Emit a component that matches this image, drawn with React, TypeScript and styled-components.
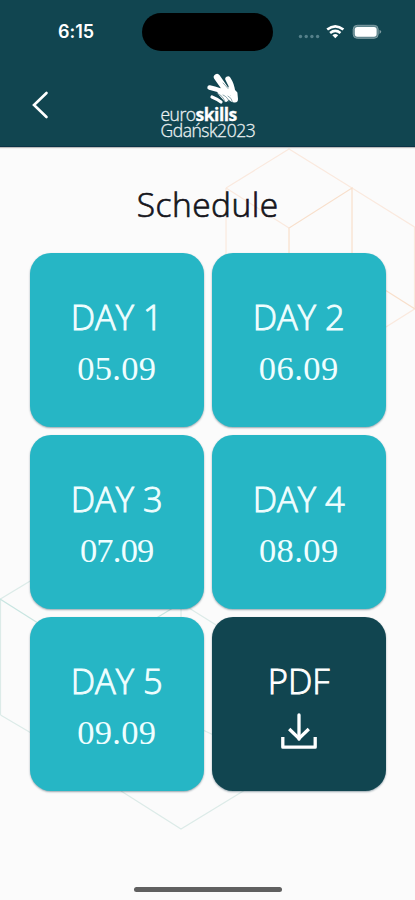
import React from "react";
import styled, { createGlobalStyle } from "styled-components";

const GlobalStyle = createGlobalStyle`
  * { box-sizing: border-box; }
  body { margin: 0; background: #fbfbfb; }
`;

const Screen = styled.div`
  position: relative;
  display: flex;
  flex-direction: column;
  width: 415px;
  height: 900px;
  overflow: hidden;
  background: #fbfbfb;
  font-family: "Open Sans", "Noto Sans", sans-serif;
`;

const Header = styled.header`
  height: 147px;
  flex: none;
  background: #114550;
  border-bottom: 1px solid #0b3346;
  box-shadow: 0 1px 1px rgba(0, 0, 0, 0.25);
  color: #fff;
  z-index: 1;
`;

const StatusBar = styled.div`
  display: grid;
  grid-template-columns: 142px 131px 142px;
  align-items: center;
  height: 38px;
  margin-top: 13px;
`;

const Clock = styled.time`
  padding-left: 10px;
  text-align: center;
  font: 600 18px/38px Inter, sans-serif;
  letter-spacing: -0.1px;
`;

const Island = styled.div`
  height: 38px;
  border-radius: 19px;
  background: #000;
`;

const StatusIcons = styled.svg`
  display: block;
  width: 86px;
  height: 20px;
  margin-left: 23px;
`;

const NavBar = styled.div`
  display: grid;
  grid-template-columns: 160.5px 1fr;
  height: 95px;
`;

const BackButton = styled.button`
  align-self: start;
  width: 22px;
  height: 32px;
  margin: 38px 0 0 29px;
  padding: 0;
  border: 0;
  background: none;
  color: inherit;

  svg { display: block; }
`;

const Brand = styled.div`
  display: flex;
  flex-direction: column;
  padding-top: 21px;
`;

const Hand = styled.svg`
  display: block;
  width: 36px;
  height: 34px;
  margin: -1px 0 1px 43.5px;
`;

const BrandLine = styled.div<{ $spacing: number }>`
  height: 16px;
  font-size: 17.5px;
  line-height: 16px;
  font-weight: 300;
  letter-spacing: ${(p) => p.$spacing}px;
  white-space: nowrap;
  color: #eaf1f2;
  -webkit-text-stroke: 0.3px currentColor;

  b { font-weight: 700; color: #fff; }
`;

const Backdrop = styled.svg`
  position: absolute;
  inset: 0;
`;

const Content = styled.main`
  position: relative;
  flex: 1;
  padding: 34px 29.5px 0 30px;
`;

const Title = styled.h1`
  margin: 0;
  height: 72px;
  text-align: center;
  font-size: 33.5px;
  line-height: 47px;
  font-weight: 300;
  letter-spacing: 0.5px;
  color: #15151b;
  -webkit-text-stroke: 0.7px #15151b;
`;

const Grid = styled.div`
  display: grid;
  grid-template-columns: repeat(2, 173.5px);
  grid-auto-rows: 173.5px;
  gap: 8.7px 8.5px;
`;

const Card = styled.button<{ $dark?: boolean }>`
  display: flex;
  flex-direction: column;
  align-items: center;
  padding: 40px 0 0;
  border: 0;
  border-radius: 21px;
  background: ${(p) => (p.$dark ? "#114550" : "#26b6c5")};
  box-shadow: 0 1px 2px rgba(0, 40, 60, 0.4);
  color: ${(p) => (p.$dark ? "#fff" : "#effeff")};
  font-family: inherit;
`;

const CardTitle = styled.span`
  font-size: 34.5px;
  line-height: 48px;
  font-weight: 300;
  -webkit-text-stroke: 0.9px currentColor;
`;

const CardDate = styled.span<{ $spacing: number }>`
  margin-top: 3px;
  font-family: "Liberation Serif", serif;
  font-size: 34.5px;
  line-height: 48px;
  letter-spacing: ${(p) => p.$spacing}px;
`;

const DownloadIcon = styled.svg`
  display: block;
  margin-top: 7px;
`;

const HomeIndicator = styled.div`
  position: absolute;
  left: 134px;
  bottom: 8px;
  width: 148px;
  height: 5px;
  border-radius: 3px;
  background: #606060;
`;

const days = [
  { name: "DAY 1", date: "05.09", spacing: 0.3 },
  { name: "DAY 2", date: "06.09", spacing: 0.5 },
  { name: "DAY 3", date: "07.09", spacing: -0.8 },
  { name: "DAY 4", date: "08.09", spacing: 0.4 },
  { name: "DAY 5", date: "09.09", spacing: 0.3 },
];

export default function App() {
  return (
    <Screen>
      <GlobalStyle />
      <Backdrop width="415" height="900" fill="none" strokeWidth="1.2">
        <g stroke="#fae9de">
          <path d="M226 188 289 149 352 188 414.5 227V309L370 337" />
          <path d="M226 188V260M226 188 289 228" />
        </g>
        <path stroke="#f8dfcb" d="M289 260V228L352 188V260M385 290 415 309" />
        <g stroke="#dcebe8">
          <path d="M0.5 715V599L60 563" />
          <path d="M0.5 715 60 750M121 791 181 829 245 790" />
          <path d="M181 603V620M181 603 240 640M190 724 220 738" />
        </g>
        <path stroke="#c8e5e1" d="M0 599 60 637M145 625 181 603" />
      </Backdrop>
      <Header>
        <StatusBar>
          <Clock>6:15</Clock>
          <Island />
          <StatusIcons viewBox="0 0 86 20" fill="none">
            <g fill="#55808a">
              <circle cx="4.5" cy="14.5" r="1.7" />
              <circle cx="10.2" cy="14.5" r="1.7" />
              <circle cx="15.9" cy="14.5" r="1.7" />
              <circle cx="21.6" cy="14.5" r="1.7" />
            </g>
            <g stroke="#fff" strokeWidth="2.6">
              <path d="M31.2 7.6Q39.3 1 47.4 7.6" />
              <path d="M34.1 11Q39.3 6.9 44.5 11" />
            </g>
            <path fill="#fff" d="M36.4 13.2Q39.3 10.9 42.2 13.2L39.3 16.3Z" />
            <rect x="57.2" y="3.3" width="25" height="13" rx="4" fill="#5c838b" stroke="#809da3" />
            <rect x="58.8" y="4.9" width="21.8" height="9.8" rx="2.6" fill="#fff" />
            <path fill="#809da3" d="M83.5 7.7Q87 9.8 83.5 12Z" />
          </StatusIcons>
        </StatusBar>
        <NavBar>
          <BackButton aria-label="Back">
            <svg width="22" height="32" fill="none" stroke="#fff" strokeWidth="2.6" strokeLinecap="round">
              <path d="M17.5 4 5 16 17.5 28" />
            </svg>
          </BackButton>
          <Brand>
            <Hand viewBox="0 0 36 34" fill="none" stroke="#fff" strokeLinecap="round">
              <path strokeWidth="6.4" d="M13 6.2 22 19" />
              <path strokeWidth="5.4" d="M24 8Q28 14 28.5 21" />
              <path strokeWidth="4.4" d="M5.5 16.5Q16 19 23 22" />
              <path strokeWidth="3.2" d="M8 26Q13 28 17 31" />
              <path strokeWidth="7" d="M17 21Q26 18 30 23L30.5 28" />
              <path strokeWidth="4.6" d="M17 23 22 28.5M21 23 28 28.5" />
              <path stroke="#5b838b" strokeWidth="0.7" d="M13 22.5Q19 24 21 31M19 24Q24 26 25 31M24 25Q28 27 28.5 31M19 12Q22 15 24 17.5" />
            </Hand>
            <BrandLine $spacing={-0.5}>euro<b>skills</b></BrandLine>
            <BrandLine $spacing={-0.45}>Gdańsk2023</BrandLine>
          </Brand>
        </NavBar>
      </Header>
      <Content>
        <Title>Schedule</Title>
        <Grid>
          {days.map((day) => (
            <Card key={day.name}>
              <CardTitle>{day.name}</CardTitle>
              <CardDate $spacing={day.spacing}>{day.date}</CardDate>
            </Card>
          ))}
          <Card $dark>
            <CardTitle>PDF</CardTitle>
            <DownloadIcon width="38" height="38" fill="none" stroke="#fff" strokeWidth="3.3" strokeLinejoin="round">
              <path strokeLinecap="round" d="M19 3V27" />
              <path strokeLinejoin="miter" d="M9.2 17 19 26.5 28.8 17" />
              <path d="M2.8 25V35.2H35.2V25" />
            </DownloadIcon>
          </Card>
        </Grid>
      </Content>
      <HomeIndicator />
    </Screen>
  );
}
